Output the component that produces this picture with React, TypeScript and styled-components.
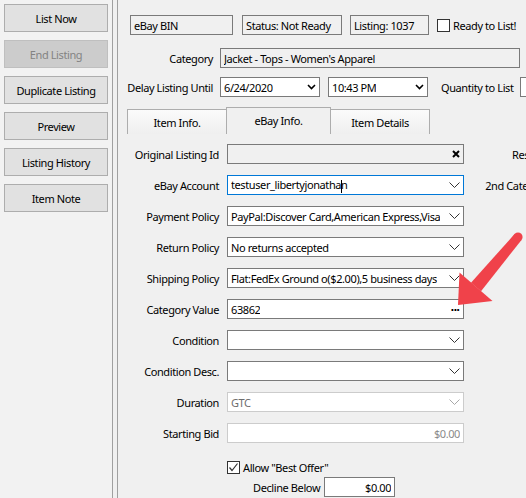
import React from 'react'
import styled, { createGlobalStyle } from 'styled-components'

const GlobalStyle = createGlobalStyle`
  html, body {
    margin: 0;
    padding: 0;
    background: #f0f0f0;
  }

  body {
    color: #000;
    font-family: "Noto Sans", "Open Sans", sans-serif;
    font-size: 11px;
    letter-spacing: -0.4px;
  }
`

const Window = styled.div`
  background: #f0f0f0;
  display: flex;
  height: 498px;
  overflow: hidden;
  position: relative;
  width: 526px;
`

const SidePanel = styled.div`
  background: #f2f2f2;
  display: flex;
  flex-direction: column;
  flex-shrink: 0;
  gap: 8px;
  padding: 4px;
  width: 104px;
`

type TSideButton = {
  disabled?: boolean
}

const SideButton = styled.div<TSideButton>`
  align-items: center;
  background: ${({ disabled }) => disabled ? '#cccccc' : '#e1e1e1'};
  border: 1px solid ${({ disabled }) => disabled ? '#bfbfbf' : '#adadad'};
  color: ${({ disabled }) => disabled ? '#838383' : '#000'};
  display: flex;
  height: 26px;
  justify-content: center;
  white-space: nowrap;
`

const Splitter = styled.div`
  border-left: 1px solid #a0a0a0;
  border-right: 1px solid #a0a0a0;
  flex-shrink: 0;
  width: 4px;
`

const Main = styled.div`
  display: flex;
  flex: 1;
  flex-direction: column;
  min-width: 0;
  padding: 15px 0 0 9px;
`

const Header = styled.div`
  display: flex;
  flex-direction: column;
  padding-left: 3px;
`

const TopRow = styled.div`
  align-items: center;
  display: flex;
  height: 20px;
`

type TBox = {
  width: number
  gap?: number
}

const ReadOnlyBox = styled.div<TBox>`
  align-items: center;
  background: #f0f0f0;
  border: 1px solid #7a7a7a;
  box-sizing: border-box;
  display: flex;
  flex-shrink: 0;
  height: 20px;
  margin-right: ${({ gap }) => gap ?? 0}px;
  padding-left: 3px;
  white-space: nowrap;
  width: ${({ width }) => width}px;
`

const CheckLine = styled.label`
  align-items: center;
  display: flex;
  gap: 3px;
  white-space: nowrap;
`

const CheckSquare = styled.span`
  align-items: center;
  background: #fff;
  border: 1px solid #333;
  box-sizing: border-box;
  display: flex;
  flex-shrink: 0;
  height: 13px;
  justify-content: center;
  width: 13px;
`

type THeaderRow = {
  top: number
}

const HeaderRow = styled.div<THeaderRow>`
  align-items: center;
  display: flex;
  height: 20px;
  margin-top: ${({ top }) => top}px;
`

const HeaderLabel = styled.div`
  display: flex;
  flex-shrink: 0;
  justify-content: flex-end;
  margin-right: 7px;
  white-space: nowrap;
  width: 83px;
`

type TField = {
  width?: number
  gap?: number
  tone?: 'normal' | 'readonly' | 'focus' | 'disabled'
  align?: 'left' | 'right'
}

const borderColors = {
  normal: '#7a7a7a',
  readonly: '#7a7a7a',
  focus: '#0078d7',
  disabled: '#cccccc',
}

const Field = styled.div<TField>`
  align-items: center;
  background: ${({ tone }) => tone === 'readonly' ? '#f0f0f0' : '#fff'};
  border: 1px solid ${({ tone = 'normal' }) => borderColors[tone]};
  box-sizing: border-box;
  color: ${({ tone }) => tone === 'disabled' ? '#6d6d6d' : '#000'};
  display: flex;
  flex-shrink: 0;
  gap: 3px;
  height: 20px;
  justify-content: ${({ align }) => align === 'right' ? 'flex-end' : 'space-between'};
  margin-right: ${({ gap }) => gap ?? 0}px;
  overflow: hidden;
  padding: 0 3px 0 3px;
  white-space: nowrap;
  width: ${({ width }) => width ? `${width}px` : 'auto'};
`

const FieldText = styled.span`
  overflow: hidden;
`

const Caret = styled.span`
  border-left: 1px solid #000;
  display: inline-block;
  height: 13px;
  margin: 0 -1px 0 0;
  vertical-align: middle;
`

const PlainText = styled.span`
  white-space: nowrap;
`

const TabStrip = styled.div`
  display: flex;
  height: 27px;
  margin-top: 10px;
`

type TTab = {
  active?: boolean
  width: number
}

const Tab = styled.div<TTab>`
  align-items: center;
  background: ${({ active }) => active ? '#f0f0f0' : 'linear-gradient(#fbfbfb, #efefef)'};
  border: 1px solid #adadad;
  border-bottom: none;
  box-sizing: border-box;
  display: flex;
  height: ${({ active }) => active ? 27 : 25}px;
  justify-content: center;
  margin-left: -1px;
  margin-top: ${({ active }) => active ? 0 : 2}px;
  padding-bottom: ${({ active }) => active ? 2 : 0}px;
  position: relative;
  width: ${({ width }) => width}px;
  z-index: ${({ active }) => active ? 1 : 0};

  &:first-child {
    margin-left: 0;
  }
`

const FormGrid = styled.div`
  align-items: center;
  display: grid;
  grid-auto-rows: 20px;
  grid-template-columns: 92px 237px 78px;
  column-gap: 8px;
  row-gap: 11px;
  margin-top: 10px;
`

const FormLabel = styled.div`
  display: flex;
  justify-content: flex-end;
  white-space: nowrap;
`

const OfferBlock = styled.div`
  display: flex;
  flex-direction: column;
  gap: 2px;
  margin-top: 17px;
  padding-left: 100px;
`

const DeclineRow = styled.div`
  align-items: center;
  display: flex;
  gap: 4px;
  padding-left: 26px;
`

const Ellipsis = styled.span`
  font-family: "DejaVu Sans", sans-serif;
  font-size: 10px;
  font-weight: bold;
  letter-spacing: -1px;
  line-height: 1;
  margin: -3px 1px 0 0;
`

const Overlay = styled.svg`
  left: 0;
  pointer-events: none;
  position: absolute;
  top: 0;
`

type TChevron = {
  tone?: 'normal' | 'disabled' | 'bold'
}

const Chevron = ({ tone = 'normal' }: TChevron) => tone === 'bold' ? (
  <svg width="9" height="6" viewBox="0 0 9 6">
    <polyline points="1,1 4.5,4.5 8,1" fill="none" stroke="#000" strokeWidth="1.6" />
  </svg>
) : (
  <svg width="11" height="6" viewBox="0 0 11 6">
    <polyline
      points="0.5,0.5 5.5,5.5 10.5,0.5"
      fill="none"
      stroke={tone === 'disabled' ? '#a8a8a8' : '#333'}
      strokeWidth="1"
    />
  </svg>
)

const CrossIcon = () => (
  <svg width="8" height="8" viewBox="0 0 8 8">
    <path d="M1 1 L7 7 M7 1 L1 7" stroke="#000" strokeWidth="2" />
  </svg>
)

const CheckMark = () => (
  <svg width="11" height="11" viewBox="0 0 11 11">
    <polyline points="1.5,5.5 4,8.5 9.5,1.5" fill="none" stroke="#333" strokeWidth="1.2" />
  </svg>
)

const sideButtons = [
  { text: 'List Now' },
  { text: 'End Listing', disabled: true },
  { text: 'Duplicate Listing' },
  { text: 'Preview' },
  { text: 'Listing History' },
  { text: 'Item Note' },
]

const tabs = [
  { text: 'Item Info.', width: 100 },
  { text: 'eBay Info.', width: 105, active: true },
  { text: 'Item Details', width: 100 },
]

const App = () => (
  <>
    <GlobalStyle />
    <Window>
      <SidePanel>
        { sideButtons.map(({ text, disabled }) => (
          <SideButton key={text} disabled={disabled}>{text}</SideButton>
        )) }
      </SidePanel>

      <Splitter />

      <Main>
        <Header>
          <TopRow>
            <ReadOnlyBox width={103} gap={9}>eBay BIN</ReadOnlyBox>
            <ReadOnlyBox width={100} gap={8}>Status: Not Ready</ReadOnlyBox>
            <ReadOnlyBox width={79} gap={8}>Listing: 1037</ReadOnlyBox>
            <CheckLine>
              <CheckSquare />
              Ready to List!
            </CheckLine>
          </TopRow>

          <HeaderRow top={13}>
            <HeaderLabel>Category</HeaderLabel>
            <Field width={300} tone="readonly">
              <FieldText>Jacket - Tops - Women's Apparel</FieldText>
            </Field>
          </HeaderRow>

          <HeaderRow top={9}>
            <HeaderLabel>Delay Listing Until</HeaderLabel>
            <Field width={100} gap={8}>
              <FieldText>6/24/2020</FieldText>
              <Chevron tone="bold" />
            </Field>
            <Field width={100} gap={13}>
              <FieldText>10:43 PM</FieldText>
              <Chevron tone="bold" />
            </Field>
            <PlainText>Quantity to List</PlainText>
            <Field width={40} style={{ marginLeft: 6 }} />
          </HeaderRow>
        </Header>

        <TabStrip>
          { tabs.map(({ text, width, active }) => (
            <Tab key={text} width={width} active={active}>{text}</Tab>
          )) }
        </TabStrip>

        <FormGrid>
          <FormLabel>Original Listing Id</FormLabel>
          <Field tone="readonly">
            <FieldText />
            <CrossIcon />
          </Field>
          <FormLabel>Reserve</FormLabel>

          <FormLabel>eBay Account</FormLabel>
          <Field tone="focus">
            <FieldText>testuser_libertyjonatha<Caret />n</FieldText>
            <Chevron />
          </Field>
          <FormLabel>2nd Category</FormLabel>

          <FormLabel>Payment Policy</FormLabel>
          <Field>
            <FieldText>PayPal:Discover Card,American Express,Visa</FieldText>
            <Chevron />
          </Field>
          <span />

          <FormLabel>Return Policy</FormLabel>
          <Field>
            <FieldText>No returns accepted</FieldText>
            <Chevron />
          </Field>
          <span />

          <FormLabel>Shipping Policy</FormLabel>
          <Field>
            <FieldText>Flat:FedEx Ground o($2.00),5 business days</FieldText>
            <Chevron />
          </Field>
          <span />

          <FormLabel>Category Value</FormLabel>
          <Field>
            <FieldText>63862</FieldText>
            <Ellipsis>...</Ellipsis>
          </Field>
          <span />

          <FormLabel>Condition</FormLabel>
          <Field>
            <FieldText />
            <Chevron />
          </Field>
          <span />

          <FormLabel>Condition Desc.</FormLabel>
          <Field>
            <FieldText />
            <Chevron />
          </Field>
          <span />

          <FormLabel>Duration</FormLabel>
          <Field tone="disabled">
            <FieldText>GTC</FieldText>
            <Chevron tone="disabled" />
          </Field>
          <span />

          <FormLabel>Starting Bid</FormLabel>
          <Field tone="disabled" align="right">
            <FieldText style={{ color: '#8a8a8a' }}>$0.00</FieldText>
          </Field>
          <span />
        </FormGrid>

        <OfferBlock>
          <CheckLine>
            <CheckSquare><CheckMark /></CheckSquare>
            Allow "Best Offer"
          </CheckLine>
          <DeclineRow>
            <PlainText>Decline Below</PlainText>
            <Field width={71} align="right">
              <FieldText>$0.00</FieldText>
            </Field>
          </DeclineRow>
        </OfferBlock>
      </Main>

      <Overlay width="526" height="498" viewBox="0 0 526 498">
        <circle cx="518" cy="237" r="4.6" fill="#f0424a" />
        <polygon points="521.5,239.9 514.5,234.1 471,282.8 481,291.2" fill="#f0424a" />
        <polygon points="458,305 459.5,272.5 492.5,301" fill="#f0424a" />
      </Overlay>
    </Window>
  </>
)

export default App
